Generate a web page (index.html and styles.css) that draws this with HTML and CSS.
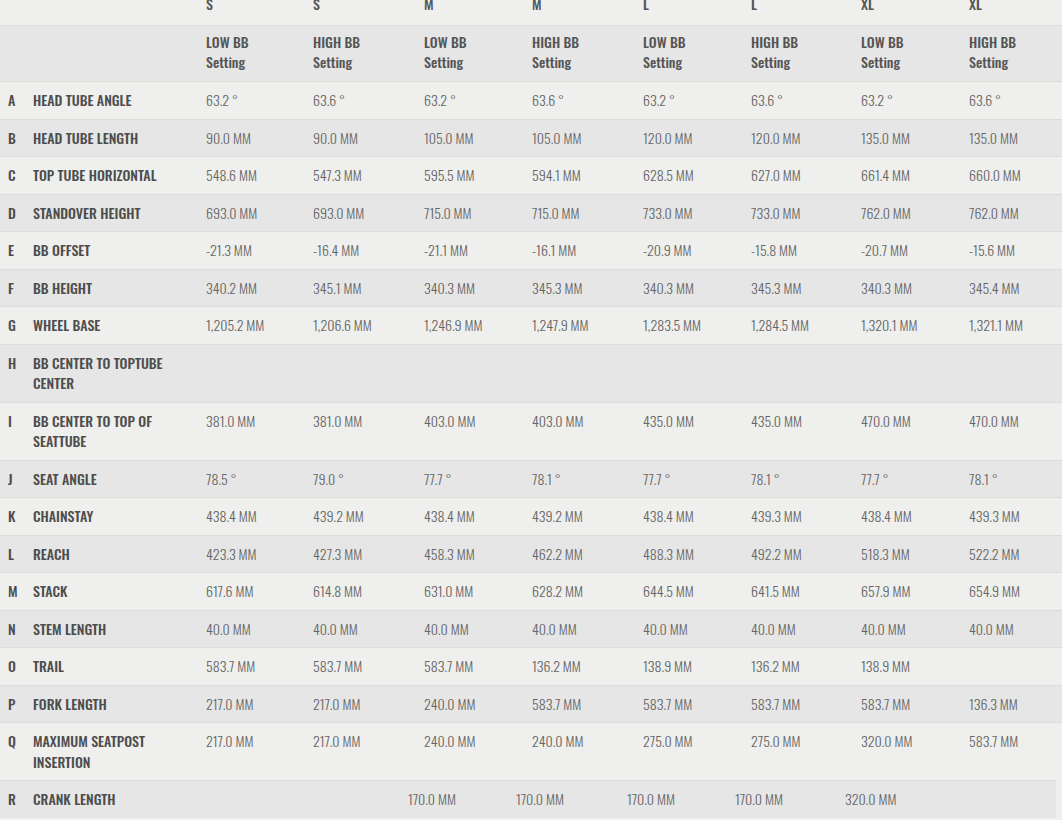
FILE: index.html
```html
<!DOCTYPE html>
<html lang="en">
<head>
<meta charset="utf-8">
<title>Geometry</title>
<link rel="stylesheet" href="styles.css">
</head>
<body>
<div class="geo">
  <div class="row head1 light">
    <div></div><div></div>
    <div class="h">S</div><div class="h">S</div><div class="h">M</div><div class="h">M</div>
    <div class="h">L</div><div class="h">L</div><div class="h">XL</div><div class="h">XL</div>
  </div>
  <div class="row head2 dark">
    <div></div><div></div>
    <div class="h">LOW BB<br>Setting</div><div class="h">HIGH BB<br>Setting</div>
    <div class="h">LOW BB<br>Setting</div><div class="h">HIGH BB<br>Setting</div>
    <div class="h">LOW BB<br>Setting</div><div class="h">HIGH BB<br>Setting</div>
    <div class="h">LOW BB<br>Setting</div><div class="h">HIGH BB<br>Setting</div>
  </div>
  <div class="row light"><div class="k">A</div><div class="n">HEAD TUBE ANGLE</div><div>63.2 °</div><div>63.6 °</div><div>63.2 °</div><div>63.6 °</div><div>63.2 °</div><div>63.6 °</div><div>63.2 °</div><div>63.6 °</div></div>
  <div class="row dark"><div class="k">B</div><div class="n">HEAD TUBE LENGTH</div><div>90.0 MM</div><div>90.0 MM</div><div>105.0 MM</div><div>105.0 MM</div><div>120.0 MM</div><div>120.0 MM</div><div>135.0 MM</div><div>135.0 MM</div></div>
  <div class="row light"><div class="k">C</div><div class="n">TOP TUBE HORIZONTAL</div><div>548.6 MM</div><div>547.3 MM</div><div>595.5 MM</div><div>594.1 MM</div><div>628.5 MM</div><div>627.0 MM</div><div>661.4 MM</div><div>660.0 MM</div></div>
  <div class="row dark"><div class="k">D</div><div class="n">STANDOVER HEIGHT</div><div>693.0 MM</div><div>693.0 MM</div><div>715.0 MM</div><div>715.0 MM</div><div>733.0 MM</div><div>733.0 MM</div><div>762.0 MM</div><div>762.0 MM</div></div>
  <div class="row light"><div class="k">E</div><div class="n">BB OFFSET</div><div>-21.3 MM</div><div>-16.4 MM</div><div>-21.1 MM</div><div>-16.1 MM</div><div>-20.9 MM</div><div>-15.8 MM</div><div>-20.7 MM</div><div>-15.6 MM</div></div>
  <div class="row dark"><div class="k">F</div><div class="n">BB HEIGHT</div><div>340.2 MM</div><div>345.1 MM</div><div>340.3 MM</div><div>345.3 MM</div><div>340.3 MM</div><div>345.3 MM</div><div>340.3 MM</div><div>345.4 MM</div></div>
  <div class="row light"><div class="k">G</div><div class="n">WHEEL BASE</div><div>1,205.2 MM</div><div>1,206.6 MM</div><div>1,246.9 MM</div><div>1,247.9 MM</div><div>1,283.5 MM</div><div>1,284.5 MM</div><div>1,320.1 MM</div><div>1,321.1 MM</div></div>
  <div class="row dark"><div class="k">H</div><div class="n">BB CENTER TO TOPTUBE<br>CENTER</div><div></div><div></div><div></div><div></div><div></div><div></div><div></div><div></div></div>
  <div class="row light"><div class="k">I</div><div class="n">BB CENTER TO TOP OF<br>SEATTUBE</div><div>381.0 MM</div><div>381.0 MM</div><div>403.0 MM</div><div>403.0 MM</div><div>435.0 MM</div><div>435.0 MM</div><div>470.0 MM</div><div>470.0 MM</div></div>
  <div class="row dark"><div class="k">J</div><div class="n">SEAT ANGLE</div><div>78.5 °</div><div>79.0 °</div><div>77.7 °</div><div>78.1 °</div><div>77.7 °</div><div>78.1 °</div><div>77.7 °</div><div>78.1 °</div></div>
  <div class="row light"><div class="k">K</div><div class="n">CHAINSTAY</div><div>438.4 MM</div><div>439.2 MM</div><div>438.4 MM</div><div>439.2 MM</div><div>438.4 MM</div><div>439.3 MM</div><div>438.4 MM</div><div>439.3 MM</div></div>
  <div class="row dark"><div class="k">L</div><div class="n">REACH</div><div>423.3 MM</div><div>427.3 MM</div><div>458.3 MM</div><div>462.2 MM</div><div>488.3 MM</div><div>492.2 MM</div><div>518.3 MM</div><div>522.2 MM</div></div>
  <div class="row light"><div class="k">M</div><div class="n">STACK</div><div>617.6 MM</div><div>614.8 MM</div><div>631.0 MM</div><div>628.2 MM</div><div>644.5 MM</div><div>641.5 MM</div><div>657.9 MM</div><div>654.9 MM</div></div>
  <div class="row dark"><div class="k">N</div><div class="n">STEM LENGTH</div><div>40.0 MM</div><div>40.0 MM</div><div>40.0 MM</div><div>40.0 MM</div><div>40.0 MM</div><div>40.0 MM</div><div>40.0 MM</div><div>40.0 MM</div></div>
  <div class="row light"><div class="k">O</div><div class="n">TRAIL</div><div>583.7 MM</div><div>583.7 MM</div><div>583.7 MM</div><div>136.2 MM</div><div>138.9 MM</div><div>136.2 MM</div><div>138.9 MM</div><div></div></div>
  <div class="row dark"><div class="k">P</div><div class="n">FORK LENGTH</div><div>217.0 MM</div><div>217.0 MM</div><div>240.0 MM</div><div>583.7 MM</div><div>583.7 MM</div><div>583.7 MM</div><div>583.7 MM</div><div>136.3 MM</div></div>
  <div class="row light"><div class="k">Q</div><div class="n">MAXIMUM SEATPOST<br>INSERTION</div><div>217.0 MM</div><div>217.0 MM</div><div>240.0 MM</div><div>240.0 MM</div><div>275.0 MM</div><div>275.0 MM</div><div>320.0 MM</div><div>583.7 MM</div></div>
  <div class="row dark crank"><div class="k">R</div><div class="n">CRANK LENGTH</div><div></div><div>170.0 MM</div><div>170.0 MM</div><div>170.0 MM</div><div>170.0 MM</div><div>320.0 MM</div><div></div></div>
</div>
</body>
</html>
```

FILE: styles.css
```css
html, body {
  margin: 0;
  padding: 0;
  background: #efefed;
}

.geo {
  margin-top: -6px;
  font-family: "Oswald", "Roboto Condensed", "DejaVu Sans Condensed", sans-serif;
  font-size: 14px;
  font-weight: 300;
  line-height: 20.5px;
  color: #666666;
}

.row {
  display: grid;
  grid-template-columns: 33px 173px 107px 111px 108px 111px 108px 110px 108px 1fr;
  padding: 8px 0;
  border-top: 1px solid #dcdcdb;
  white-space: nowrap;
}

.row > div:first-child {
  padding-left: 8px;
}

.light { background: #efefed; }
.dark { background: #e6e6e6; }

.head1 {
  border-top: none;
  padding: 0 0 10.5px;
}

.head2 {
  padding: 6px 0 9px;
  line-height: 20px;
}

.h {
  font-weight: 500;
  color: #555555;
}

.k, .n {
  font-weight: 500;
  color: #4d4d4d;
}

.crank {
  grid-template-columns: 33px 173px 202px 108px 111px 108px 110px 110px 1fr;
  margin-right: 6px;
}
```
